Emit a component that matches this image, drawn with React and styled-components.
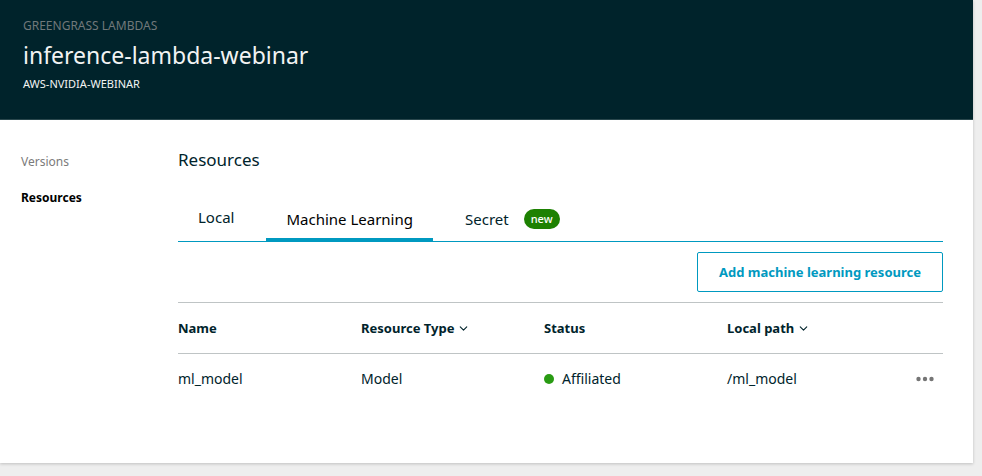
import React from "react";
import styled, { createGlobalStyle } from "styled-components";
import { ChevronDown } from "lucide-react";

const GlobalStyle = createGlobalStyle`
  * { box-sizing: border-box; }
  body {
    margin: 0;
    background: #eeeeee;
    color: #00232b;
    font-family: "Noto Sans", "Open Sans", sans-serif;
    font-size: 13px;
    line-height: 20px;
  }
  button { font: inherit; color: inherit; cursor: pointer; }
`;

const Page = styled.div`
  padding: 0 9px 13px 0;
`;

const Card = styled.div`
  background: #ffffff;
  box-shadow: 0 1px 3px rgba(0, 0, 0, 0.2);
`;

const Header = styled.header`
  padding: 16px 23px 25px;
  background: #00232b;
  border-bottom: 1px solid #29474d;
  color: #f2f3f3;
`;

const Caption = styled.p`
  margin: 0;
  font-size: ${(p) => (p.$muted ? "12px" : "11px")};
  line-height: 20px;
  text-transform: uppercase;
  color: ${(p) => (p.$muted ? "#70787a" : "#f2f3f3")};
`;

const Title = styled.h1`
  margin: 0;
  font-size: 23px;
  line-height: 38px;
  font-weight: 400;
`;

const Body = styled.div`
  display: grid;
  grid-template-columns: 157px minmax(0, 1fr);
  padding: 24px 30px 58px 21px;
`;

const SideNav = styled.nav`
  display: flex;
  flex-direction: column;
  align-items: flex-start;
  gap: 16px;
  padding-top: 8px;
`;

const NavLink = styled.a`
  font-size: 12px;
  line-height: 20px;
  font-weight: ${(p) => (p.$active ? 700 : 400)};
  color: ${(p) => (p.$active ? "#000000" : "#7b7b7b")};
  text-decoration: none;
`;

const SectionTitle = styled.h2`
  margin: 0 0 32px;
  font-size: 17px;
  line-height: 32px;
  font-weight: 400;
`;

const TabList = styled.div`
  display: flex;
  align-items: stretch;
  gap: 12px;
  border-bottom: 1px solid #0099c0;
`;

const Tab = styled.button`
  display: flex;
  align-items: center;
  gap: 15px;
  height: 33px;
  padding: ${(p) => (p.$raised ? "0 20px 15px" : "0 20px 11px")};
  border: 0;
  background: none;
  box-shadow: ${(p) => (p.$active ? "inset 0 -3px 0 #0099c0" : "none")};
  color: ${(p) => (p.$active ? "#000000" : "#00232b")};
  font-size: 15px;
  line-height: 20px;
  white-space: nowrap;
`;

const Badge = styled.span`
  padding: 0 7px;
  border-radius: 10px;
  background: #1d8102;
  color: #ffffff;
  font-size: 11px;
  line-height: 20px;
  font-weight: 500;
`;

const Actions = styled.div`
  display: flex;
  justify-content: flex-end;
  padding: 10px 0;
`;

const OutlineButton = styled.button`
  height: 40px;
  padding: 0 21px;
  border: 1px solid #0099c0;
  border-radius: 2px;
  background: #ffffff;
  color: #0099c0;
  font-weight: 700;
`;

const Table = styled.table`
  width: 100%;
  table-layout: fixed;
  border-collapse: collapse;
  border-top: 1px solid #bfc4c5;
`;

const HeadCell = styled.th`
  width: ${(p) => (p.$narrow ? "33px" : "auto")};
  height: 51px;
  padding: 0;
  border-bottom: 1px solid #bfc4c5;
  text-align: left;
  font-weight: 700;
`;

const Cell = styled.td`
  height: 51px;
  padding: 0;
  font-size: 14px;
`;

const SortButton = styled.button`
  display: flex;
  align-items: center;
  gap: 3px;
  padding: 0;
  border: 0;
  background: none;
  white-space: nowrap;
`;

const Status = styled.span`
  display: flex;
  align-items: center;
  gap: 8px;
`;

const StatusDot = styled.span`
  width: 10px;
  height: 10px;
  border-radius: 50%;
  background: #299b13;
`;

const MoreButton = styled.button`
  display: flex;
  padding: 0;
  margin-left: 6px;
  border: 0;
  background: none;
`;

function SortHeader({ children }) {
  return (
    <SortButton type="button">
      {children}
      <ChevronDown size={13} strokeWidth={2} aria-hidden="true" />
    </SortButton>
  );
}

const resources = [
  { name: "ml_model", type: "Model", status: "Affiliated", path: "/ml_model" },
];

export default function App() {
  return (
    <Page>
      <GlobalStyle />
      <Card>
        <Header>
          <Caption $muted>Greengrass Lambdas</Caption>
          <Title>inference-lambda-webinar</Title>
          <Caption>AWS-NVIDIA-WEBINAR</Caption>
        </Header>
        <Body>
          <SideNav>
            <NavLink href="#versions">Versions</NavLink>
            <NavLink href="#resources" $active aria-current="page">Resources</NavLink>
          </SideNav>
          <main>
            <SectionTitle>Resources</SectionTitle>
            <TabList role="tablist">
              <Tab type="button" role="tab" aria-selected="false" $raised>Local</Tab>
              <Tab type="button" role="tab" aria-selected="true" $active>Machine Learning</Tab>
              <Tab type="button" role="tab" aria-selected="false">
                Secret <Badge>new</Badge>
              </Tab>
            </TabList>
            <Actions>
              <OutlineButton type="button">Add machine learning resource</OutlineButton>
            </Actions>
            <Table>
              <thead>
                <tr>
                  <HeadCell>Name</HeadCell>
                  <HeadCell><SortHeader>Resource Type</SortHeader></HeadCell>
                  <HeadCell>Status</HeadCell>
                  <HeadCell><SortHeader>Local path</SortHeader></HeadCell>
                  <HeadCell $narrow aria-label="Actions" />
                </tr>
              </thead>
              <tbody>
                {resources.map((r) => (
                  <tr key={r.name}>
                    <Cell>{r.name}</Cell>
                    <Cell>{r.type}</Cell>
                    <Cell><Status><StatusDot />{r.status}</Status></Cell>
                    <Cell>{r.path}</Cell>
                    <Cell>
                      <MoreButton type="button" aria-label="More actions">
                        <svg width="20" height="6" viewBox="0 0 20 6" fill="#757575" aria-hidden="true">
                          <circle cx="2.5" cy="3" r="2.2" />
                          <circle cx="9" cy="3" r="2.2" />
                          <circle cx="15.5" cy="3" r="2.2" />
                        </svg>
                      </MoreButton>
                    </Cell>
                  </tr>
                ))}
              </tbody>
            </Table>
          </main>
        </Body>
      </Card>
    </Page>
  );
}
